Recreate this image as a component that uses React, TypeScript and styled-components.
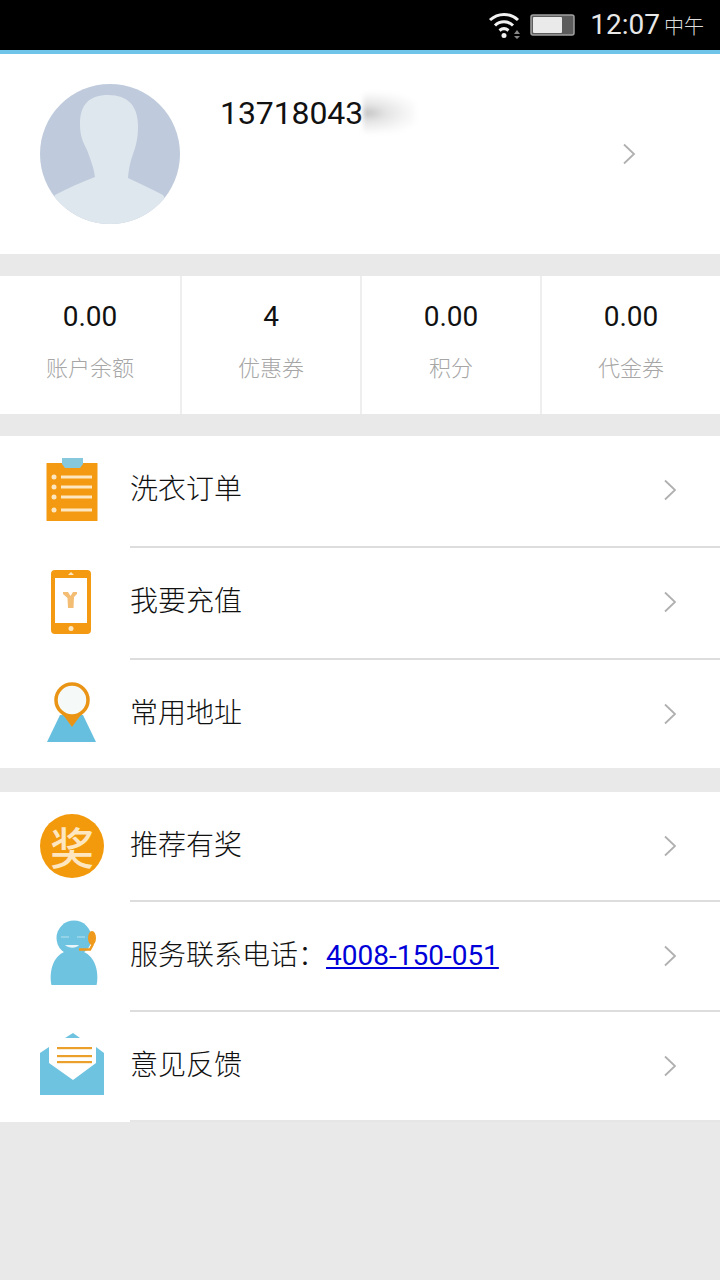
import React from "react";
import styled, { createGlobalStyle } from "styled-components";

const Global = createGlobalStyle`
  html, body { margin: 0; padding: 0; background: #e9e9e9; }
  * { box-sizing: border-box; }
  body { font-family: Roboto, "Noto Sans CJK SC", sans-serif; }
`;

const Page = styled.div`
  width: 720px; height: 1280px; background: #e9e9e9; overflow: hidden;
  display: flex; flex-direction: column;
`;
const StatusBar = styled.div`
  height: 54px; flex: none; background: #000; border-bottom: 4px solid #6ec5e9;
  display: flex; align-items: center; justify-content: flex-end;
  padding: 0 16px 0 0; color: #e8e8e8;
`;
const BatteryWrap = styled.div`
  margin-left: 8px; display: flex;
`;
const Time = styled.span`
  font-size: 28px; margin-left: 14px; line-height: 50px;
`;
const Meridiem = styled.span`
  font-size: 20px; margin-left: 4px; line-height: 50px; padding-top: 4px; color: #ddd; font-weight: 300;
`;
const Profile = styled.div`
  height: 200px; flex: none; background: #fff; padding: 30px 0 0 40px;
  display: flex; align-items: flex-start;
`;
const Info = styled.div`
  margin-left: 40px; display: flex; align-items: center; height: 58px;
  font-size: 32px; color: #111; letter-spacing: -0.1px;
`;
const Smudge = styled.span`
  width: 52px; height: 40px; flex: none;
  background: radial-gradient(ellipse at 8% 50%, #c4c4c4 0%, #e4e4e4 28%, #f6f6f6 60%, #fff 85%);
  filter: blur(2px);
`;
const ProfileChevron = styled.div`
  margin-left: auto; margin-right: 84px; align-self: center; margin-top: -30px;
  display: flex;
`;
const Stats = styled.div`
  height: 138px; flex: none; margin-top: 22px; background: #fff;
  display: grid; grid-template-columns: 180px 180px 180px 180px;
`;
const Stat = styled.div<{ $first?: boolean }>`
  display: flex; flex-direction: column; align-items: center;
  border-left: ${p => (p.$first ? "none" : "2px solid #eee")};
  padding-top: 23px;
`;
const StatValue = styled.div`
  font-size: 28px; line-height: 36px; color: #111;
`;
const StatLabel = styled.div`
  font-size: 22px; line-height: 32px; color: #a6a6a6; margin-top: 18px; font-weight: 300;
`;
const Group = styled.div<{ $gap: number }>`
  flex: none; margin-top: ${p => p.$gap}px; background: #fff;
  display: flex; flex-direction: column;
`;
const Row = styled.div<{ $h: number }>`
  height: ${p => p.$h}px; display: flex;
`;
const IconCell = styled.div<{ $x: number; $lift: number }>`
  width: 130px; flex: none; display: flex; align-items: center; justify-content: flex-start;
  padding-left: ${p => p.$x}px;
  padding-bottom: ${p => p.$lift}px;
`;
const RowBody = styled.div<{ $divider?: string; $lift?: number }>`
  flex: 1; display: flex; align-items: center; justify-content: space-between;
  padding-right: 43px;
  padding-bottom: ${p => p.$lift ?? 0}px;
  border-bottom: ${p => (p.$divider ? `2px solid ${p.$divider}` : "none")};
`;
const RowTitle = styled.div`
  font-size: 28px; color: #111; line-height: 40px; font-weight: 300;
`;
const Phone = styled.a`
  color: #0000d8; text-decoration: underline; font-size: 28px; font-weight: 400;
`;
const AwardBadge = styled.div`
  width: 64px; height: 64px; border-radius: 50%; background: #f29a0c; color: #fde6c0;
  display: flex; align-items: center; justify-content: center;
  font-size: 44px; line-height: 64px; font-weight: 500;
  font-family: "Noto Sans CJK SC", sans-serif;
`;

const Chevron = () => (
  <svg width="14" height="22" viewBox="0 0 14 22" fill="none">
    <path d="M2 1.5 L12 11 L2 20.5" stroke="#b0b0b0" strokeWidth="1.8" />
  </svg>
);

const Wifi = () => (
  <svg width="34" height="28" viewBox="0 0 34 28" fill="none" stroke="#f2f2f2" strokeWidth="3">
    <path d="M2 9 C10 1.5 22 1.5 30 9" />
    <path d="M7 14.5 C12 9.5 20 9.5 25 14.5" />
    <path d="M11.5 19.5 C14.5 17 17.5 17 20.5 19.5" />
    <circle cx="16" cy="24.5" r="2.5" fill="#f2f2f2" stroke="none" />
    <path d="M26 23 L29 19 L32 23 Z M26 25 L32 25 L29 28 Z" fill="#888" stroke="none" />
  </svg>
);
const Battery = () => (
  <svg width="46" height="24" viewBox="0 0 46 24">
    <rect x="1" y="2" width="43" height="20" rx="2" fill="#5c5c5c" stroke="#a0a0a0" strokeWidth="1.5" />
    <rect x="3" y="4" width="29" height="16" rx="1" fill="#eaeaea" />
  </svg>
);

const Avatar = () => (
  <svg width="140" height="140" viewBox="0 0 140 140">
    <defs>
      <clipPath id="av"><circle cx="70" cy="70" r="70" /></clipPath>
    </defs>
    <circle cx="70" cy="70" r="70" fill="#bfcbdc" />
    <g clipPath="url(#av)" fill="#dfe7ee">
      <path d="M40 40 C40 20 50 11 68 11 C88 11 98 22 98 42 C98 54 96 62 93 70 C91 76 89 82 88 94 C100 100 112 105 123 111 L140 140 L0 140 L15 111 C28 104 42 98 55 93 C54 84 50 74 47 66 C43 58 40 52 40 40 Z" />
    </g>
  </svg>
);

const ClipboardIcon = () => (
  <svg width="54" height="66" viewBox="0 0 54 66">
    <rect x="0.5" y="5" width="51" height="58" fill="#f39a12" />
    <path d="M16 0 H37 V6 L34 10 H19 L16 6 Z" fill="#86c8dc" />
    {[19, 29, 39, 52].map(y => (
      <g key={y}>
        <circle cx="8" cy={y} r="2.5" fill="#fde7c0" />
        <rect x="15" y={y - 1.5} width="31" height="3" fill="#fde7c0" />
      </g>
    ))}
  </svg>
);
const PhoneIcon = () => (
  <svg width="42" height="66" viewBox="0 0 42 66">
    <rect x="1" y="1" width="40" height="64" rx="4" fill="#f39a12" />
    <rect x="5" y="9" width="32" height="45" fill="#fff" />
    <circle cx="21" cy="59.5" r="2.5" fill="#fde7c0" />
    <path d="M18 6 L21 3 L24 6 Z" fill="#fde7c0" />
    <path d="M13 23 H18 L20.5 27 L23 23 H27 V25 L24 28 L23.5 39 H18 L17.5 29 L13 25 Z" fill="#f4bd74" />
  </svg>
);
const PinIcon = () => (
  <svg width="52" height="62" viewBox="0 0 52 62">
    <path d="M14 33 H37 L50 60 H1 Z" fill="#67bfdf" />
    <circle cx="26" cy="18" r="16" fill="#f5faf8" stroke="#ea9415" strokeWidth="3.5" />
    <path d="M15 30 C20 35 32 35 37 30 L26 45 Z" fill="#ea9415" />
  </svg>
);
const AgentIcon = () => (
  <svg width="48" height="66" viewBox="0 0 48 66">
    <path d="M1.5 65 C-1 55 1 30 24 30 C47 30 49 55 46.5 65 Z" fill="#6ec3e0" />
    <circle cx="24" cy="18" r="17.5" fill="#6ec3e0" />
    <path d="M11 17 H19 M27 17 H35" stroke="#a0d8e9" strokeWidth="1.5" />
    <path d="M15 25 C19 28.5 26 28.5 29 25 Z" fill="#e8f6fa" />
    <ellipse cx="42" cy="18" rx="4" ry="7" fill="#ef9a1c" />
    <path d="M29 29.5 H40 L43 24" stroke="#ef9a1c" strokeWidth="2.5" fill="none" />
  </svg>
);
const MailIcon = () => (
  <svg width="64" height="62" viewBox="0 0 64 62">
    <path d="M0 20 L9 14 H56 L64 20 V62 H0 Z" fill="#6ec3e0" />
    <path d="M9 5 H56 V30 L33 47 L9 30 Z" fill="#fff" />
    <path d="M25 5 L33 0 L40 5 Z" fill="#6ec3e0" />
    <rect x="17" y="14" width="35" height="2.2" fill="#eba02b" />
    <rect x="17" y="22" width="35" height="2.2" fill="#eba02b" />
    <rect x="17" y="28" width="35" height="2.2" fill="#eba02b" />
  </svg>
);

const stats = [
  ["0.00", "账户余额"],
  ["4", "优惠券"],
  ["0.00", "积分"],
  ["0.00", "代金券"],
];

export default function App() {
  return (
    <Page>
      <Global />
      <StatusBar>
        <Wifi />
        <BatteryWrap><Battery /></BatteryWrap>
        <Time>12:07</Time>
        <Meridiem>中午</Meridiem>
      </StatusBar>
      <Profile>
        <Avatar />
        <Info>
          13718043
          <Smudge />
        </Info>
        <ProfileChevron><Chevron /></ProfileChevron>
      </Profile>
      <Stats>
        {stats.map(([v, l], i) => (
          <Stat key={l} $first={i === 0}>
            <StatValue>{v}</StatValue>
            <StatLabel>{l}</StatLabel>
          </Stat>
        ))}
      </Stats>
      <Group $gap={22}>
        <Row $h={112}>
          <IconCell $x={46} $lift={2}><ClipboardIcon /></IconCell>
          <RowBody $divider="#ddd" $lift={2}><RowTitle>洗衣订单</RowTitle><Chevron /></RowBody>
        </Row>
        <Row $h={112}>
          <IconCell $x={50} $lift={4}><PhoneIcon /></IconCell>
          <RowBody $divider="#ddd" $lift={2}><RowTitle>我要充值</RowTitle><Chevron /></RowBody>
        </Row>
        <Row $h={108}>
          <IconCell $x={46} $lift={2}><PinIcon /></IconCell>
          <RowBody><RowTitle>常用地址</RowTitle><Chevron /></RowBody>
        </Row>
      </Group>
      <Group $gap={24}>
        <Row $h={110}>
          <IconCell $x={40} $lift={2}><AwardBadge>奖</AwardBadge></IconCell>
          <RowBody $divider="#ddd"><RowTitle>推荐有奖</RowTitle><Chevron /></RowBody>
        </Row>
        <Row $h={110}>
          <IconCell $x={50} $lift={8}><AgentIcon /></IconCell>
          <RowBody $divider="#ddd">
            <RowTitle>服务联系电话：<Phone href="#">4008-150-051</Phone></RowTitle>
            <Chevron />
          </RowBody>
        </Row>
        <Row $h={110}>
          <IconCell $x={40} $lift={6}><MailIcon /></IconCell>
          <RowBody $divider="#e6e6e6"><RowTitle>意见反馈</RowTitle><Chevron /></RowBody>
        </Row>
      </Group>
    </Page>
  );
}
